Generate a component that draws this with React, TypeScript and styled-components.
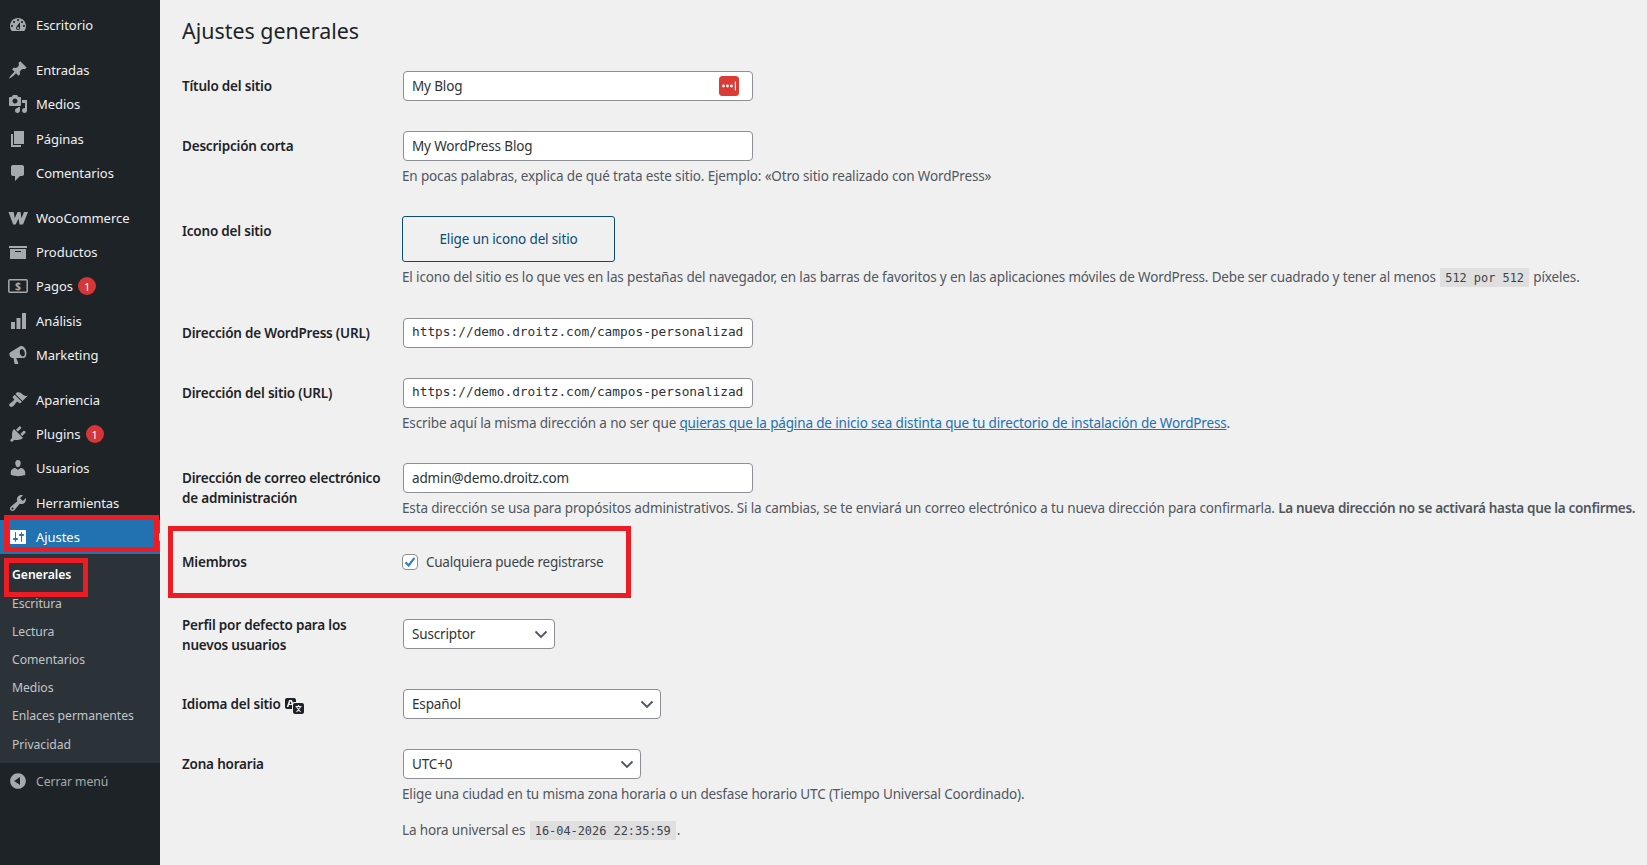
import React from 'react';
import styled, { createGlobalStyle } from 'styled-components';

const FONT = '"Noto Sans", "Open Sans", sans-serif';
const MONO = '"DejaVu Sans Mono", "Liberation Mono", monospace';

const icons: Record<string, string> = {
    dashboard: 'M3.76 16h12.48c1.1-1.37 1.76-3.11 1.76-5 0-4.42-3.58-8-8-8s-8 3.58-8 8c0 1.89.66 3.63 1.76 5zM10 4c.55 0 1 .45 1 1s-.45 1-1 1-1-.45-1-1 .45-1 1-1zM6 6c.55 0 1 .45 1 1s-.45 1-1 1-1-.45-1-1 .45-1 1-1zm8 0c.55 0 1 .45 1 1s-.45 1-1 1-1-.45-1-1 .45-1 1-1zm-5.37 5.55L12 7v6c0 1.1-.9 2-2 2s-2-.9-2-2c0-.57.24-1.08.63-1.45zM4 10c.55 0 1 .45 1 1s-.45 1-1 1-1-.45-1-1 .45-1 1-1zm12 0c.55 0 1 .45 1 1s-.45 1-1 1-1-.45-1-1 .45-1 1-1zm-5 3c0-.55-.45-1-1-1s-1 .45-1 1 .45 1 1 1 1-.45 1-1z',
    post: 'M10.44 3.02l1.82-1.82 6.36 6.35-1.83 1.82c-1.05-.68-2.48-.57-3.41.36l-.75.75c-.92.93-1.04 2.35-.35 3.41l-1.83 1.82-2.41-2.41-2.8 2.79c-.42.42-3.38 2.71-3.8 2.29s1.86-3.39 2.28-3.81l2.79-2.79L4.1 9.36l1.83-1.82c1.05.69 2.48.57 3.4-.36l.75-.75c.93-.92 1.05-2.35.36-3.41z',
    media: 'M13 11V4c0-.55-.45-1-1-1h-1.67L9 1H5L3.67 3H2c-.55 0-1 .45-1 1v7c0 .55.45 1 1 1h10c.55 0 1-.45 1-1zM7 4.5c1.38 0 2.5 1.12 2.5 2.5S8.38 9.5 7 9.5 4.5 8.38 4.5 7 5.62 4.5 7 4.5zM14 6h5v10.5c0 1.38-1.12 2.5-2.5 2.5S14 17.88 14 16.5s1.12-2.5 2.5-2.5c.17 0 .34.02.5.05V9h-3V6zm-4 8.05V13h2v3.5c0 1.38-1.12 2.5-2.5 2.5S7 17.88 7 16.5 8.12 14 9.5 14c.17 0 .34.02.5.05z',
    page: 'M6 15V2h10v13H6zm-1 1h8v2H3V5h2v11z',
    comment: 'M5 2h9c1.1 0 2 .9 2 2v7c0 1.1-.9 2-2 2h-2l-5 5v-5H5c-1.1 0-2-.9-2-2V4c0-1.1.9-2 2-2z',
    woo: 'M0.5 4h5.200l1 6.200L9.500 4h3l1 6.200L16 4h4l-5 12.500h-3.500l-1-6-2.800 6H5.200z',
    archive: 'M19 4v2H1V4h18zM2 7h16v10H2V7zm11 3V9H7v1h6z',
    chart: 'M3 11h4v7H3zM8.500 7h4v11h-4zM14 2h4v16h-4z',
    megaphone: 'M18.15 5.94c.46 1.62.38 3.22-.02 4.48-.42 1.28-1.26 2.18-2.3 2.48-.16.06-.26.06-.4.06-.06.02-.12.02-.18.02-.06.02-.14.02-.22.02h-6.8l2.22 5.5c.02.14-.06.26-.14.34-.08.1-.24.16-.34.16H6.95c-.1 0-.26-.06-.34-.16-.08-.08-.16-.2-.14-.34l-1-5.5H4.25l-.02-.02c-.5.06-1.08-.18-1.54-.62s-.88-1.08-1.06-1.88c-.24-.8-.2-1.56-.02-2.2.18-.62.58-1.08 1.06-1.3l.02-.02 9-5.4c.1-.06.18-.1.24-.16.06-.04.14-.08.24-.12.16-.08.28-.12.5-.18 1.04-.3 2.24.1 3.22 1s1.84 2.24 2.26 3.86zM13.2 4.200c-1.300.4-1.800 2.300-1.200 4.300s2.100 3.200 3.400 2.800 1.800-2.300 1.200-4.300-2.100-3.200-3.400-2.800z',
    brush: 'M14.48 11.06L7.41 3.99l1.5-1.5c.5-.56 2.3-.47 3.51.32 1.21.8 1.43 1.28 2.91 2.1 1.18.64 2.45 1.26 4.45.85zm-.71.71L6.7 4.7 4.93 6.47c-.39.39-.39 1.02 0 1.41l1.06 1.06c.39.39.39 1.03 0 1.42-.6.6-1.43 1.11-2.21 1.69-.35.26-.7.53-1.01.84C1.43 13.23.4 14.89 1.75 16.25c1.35 1.35 3.01.33 4.36-1.02.31-.31.58-.66.84-1.01.58-.78 1.09-1.61 1.69-2.21.39-.39 1.02-.39 1.41 0l1.06 1.06c.39.39 1.02.39 1.41 0z',
    plugin: 'M13.11 4.36L9.87 7.6 8 5.73l3.24-3.24c.35-.34 1.05-.2 1.56.32.52.51.66 1.21.31 1.55zm-8 1.77l.91-1.12 9.01 9.01-1.19.84c-.71.71-2.63 1.16-3.82 1.16H6.14L4.9 17.26c-.59.59-1.54.59-2.12 0-.59-.58-.59-1.53 0-2.12l1.24-1.24v-3.88c0-1.13.4-3.19 1.09-3.89zm7.26 3.97l3.24-3.24c.34-.35 1.04-.21 1.55.31.52.51.66 1.21.31 1.55l-3.24 3.25z',
    users: 'M10 9.25c-2.27 0-2.73-3.44-2.73-3.44C7 4.02 7.82 2 9.97 2c2.16 0 2.98 2.02 2.71 3.81 0 0-.41 3.44-2.68 3.44zm0 2.57L12.72 10c2.39 0 4.52 2.33 4.52 4.53v2.49s-3.65 1.13-7.24 1.13c-3.65 0-7.24-1.13-7.24-1.13v-2.49c0-2.25 1.94-4.48 4.47-4.48z',
    tools: 'M16.68 9.77c-1.34 1.34-3.3 1.67-4.95.99l-5.41 6.52c-.99.99-2.59.99-3.58 0s-.99-2.59 0-3.57l6.52-5.42c-.68-1.65-.35-3.61.99-4.95 1.28-1.28 3.12-1.62 4.72-1.06l-2.89 2.89 2.82 2.82 2.86-2.87c.53 1.58.18 3.39-1.08 4.65zM3.81 16.21c.4.39 1.04.39 1.43 0 .4-.4.4-1.04 0-1.43-.39-.4-1.03-.4-1.43 0-.39.39-.39 1.03 0 1.43z',
    settings: 'M18 16V4c0-.55-.45-1-1-1H3c-.55 0-1 .45-1 1v12c0 .55.45 1 1 1h14c.55 0 1-.45 1-1zM8 11h1c.55 0 1 .45 1 1s-.45 1-1 1H8v1.5c0 .28-.22.5-.5.5s-.5-.22-.5-.5V13H6c-.55 0-1-.45-1-1s.45-1 1-1h1V5.5c0-.28.22-.5.5-.5s.5.22.5.5V11zm5-2h-1c-.55 0-1-.45-1-1s.45-1 1-1h1V5.5c0-.28.22-.5.5-.5s.5.22.5.5V7h1c.55 0 1 .45 1 1s-.45 1-1 1h-1v5.5c0 .28-.22.5-.5.5s-.5-.22-.5-.5V9z',
    collapse: 'M10 2.16c4.33 0 7.84 3.51 7.84 7.84s-3.51 7.84-7.84 7.84S2.16 14.33 2.16 10 5.71 2.16 10 2.16zm2 11.72V6.12L6.18 9.97z',
};

const Icon = ({ name }: { name: string }) => (
    <IconSvg viewBox="0 0 20 20">
        <path d={icons[name]} fillRule="evenodd" />
    </IconSvg>
);

const PaymentsIcon = () => (
    <IconSvg viewBox="0 0 20 20">
        <rect x="0.8" y="3.8" width="18.400" height="12.400" rx="1" fill="none" stroke="currentColor" strokeWidth="1.500" />
        <text x="10" y="14" fontSize="10.500" fontWeight="700" textAnchor="middle" fill="currentColor" fontFamily={FONT}>$</text>
    </IconSvg>
);

type MenuEntry = { label: string; icon: string; badge?: string };

const groups: MenuEntry[][] = [
    [{ label: 'Escritorio', icon: 'dashboard' }],
    [
        { label: 'Entradas', icon: 'post' },
        { label: 'Medios', icon: 'media' },
        { label: 'Páginas', icon: 'page' },
        { label: 'Comentarios', icon: 'comment' },
    ],
    [
        { label: 'WooCommerce', icon: 'woo' },
        { label: 'Productos', icon: 'archive' },
        { label: 'Pagos', icon: 'payments', badge: '1' },
        { label: 'Análisis', icon: 'chart' },
        { label: 'Marketing', icon: 'megaphone' },
    ],
    [
        { label: 'Apariencia', icon: 'brush' },
        { label: 'Plugins', icon: 'plugin', badge: '1' },
        { label: 'Usuarios', icon: 'users' },
        { label: 'Herramientas', icon: 'tools' },
    ],
];

const subItems = ['Escritura', 'Lectura', 'Comentarios', 'Medios', 'Enlaces permanentes', 'Privacidad'];

const Chevron = () => (
    <svg width="14" height="14" viewBox="0 0 14 14" fill="none" stroke="#50575e" strokeWidth="1.900">
        <path d="M1.500 4.500 7 10l5.500-5.500" />
    </svg>
);

const Sidebar = () => (
    <Side>
        {groups.map((group, i) => (
            <MenuGroup key={i}>
                {group.map(item => (
                    <MenuItem key={item.label}>
                        <IconSlot>
                            {item.icon === 'payments' ? <PaymentsIcon /> : <Icon name={item.icon} />}
                        </IconSlot>
                        {item.label}
                        {item.badge && <Badge>{item.badge}</Badge>}
                    </MenuItem>
                ))}
            </MenuGroup>
        ))}
        <ActiveItem>
            <IconSlot>
                <Icon name="settings" />
            </IconSlot>
            Ajustes
            <MenuArrow />
            <RedBox $top={-5} $left={4} $width={155} $height={37} />
        </ActiveItem>
        <SubMenu>
            <SubItem $current>
                Generales
                <RedBox $top={-3} $left={4} $width={84} $height={39} />
            </SubItem>
            {subItems.map(label => (
                <SubItem key={label}>{label}</SubItem>
            ))}
        </SubMenu>
        <Collapse>
            <IconSlot>
                <Icon name="collapse" />
            </IconSlot>
            Cerrar menú
        </Collapse>
    </Side>
);

const App = () => (
    <Page>
        <GlobalStyle />
        <Sidebar />
        <Main>
            <Title>Ajustes generales</Title>
            <FormTable>
                <Row>
                    <Label>Título del sitio</Label>
                    <Cell>
                        <TextField>
                            My Blog
                            <PassBadge viewBox="0 0 20 20">
                                <rect width="20" height="20" rx="3.500" fill="#db3a35" />
                                <circle cx="4.500" cy="10" r="1.400" fill="#fff" />
                                <circle cx="8.500" cy="10" r="1.400" fill="#fff" />
                                <circle cx="12.500" cy="10" r="1.400" fill="#fff" />
                                <rect x="15.800" y="5.500" width="1.200" height="9" fill="#fff" />
                            </PassBadge>
                        </TextField>
                    </Cell>
                </Row>
                <Row>
                    <Label>Descripción corta</Label>
                    <Cell>
                        <TextField>My WordPress Blog</TextField>
                        <Description>En pocas palabras, explica de qué trata este sitio. Ejemplo: «Otro sitio realizado con WordPress»</Description>
                    </Cell>
                </Row>
                <Row>
                    <Label>Icono del sitio</Label>
                    <Cell>
                        <IconButton>Elige un icono del sitio</IconButton>
                        <Description>
                            El icono del sitio es lo que ves en las pestañas del navegador, en las barras de favoritos y en las aplicaciones móviles de WordPress. Debe ser cuadrado y tener al menos <Code>512 por 512</Code> píxeles.
                        </Description>
                    </Cell>
                </Row>
                <Row>
                    <Label>Dirección de WordPress (URL)</Label>
                    <Cell>
                        <TextField $mono>https://demo.droitz.com/campos-personalizad</TextField>
                    </Cell>
                </Row>
                <Row>
                    <Label>Dirección del sitio (URL)</Label>
                    <Cell>
                        <TextField $mono>https://demo.droitz.com/campos-personalizad</TextField>
                        <Description>
                            Escribe aquí la misma dirección a no ser que <DocLink>quieras que la página de inicio sea distinta que tu directorio de instalación de WordPress</DocLink>.
                        </Description>
                    </Cell>
                </Row>
                <Row>
                    <Label>Dirección de correo electrónico<br />de administración</Label>
                    <Cell $bottom={14}>
                        <TextField>admin@demo.droitz.com</TextField>
                        <Description>
                            Esta dirección se usa para propósitos administrativos. Si la cambias, se te enviará un correo electrónico a tu nueva dirección para confirmarla. <Strong>La nueva dirección no se activará hasta que la confirmes.</Strong>
                        </Description>
                    </Cell>
                </Row>
                <Row>
                    <Label>Miembros</Label>
                    <Cell $top={20} $bottom={23}>
                        <CheckLine>
                            <CheckBox>
                                <svg width="14" height="14" viewBox="0 0 14 14" fill="none" stroke="#3582c4" strokeWidth="2.200">
                                    <path d="M2.500 7.200 5.600 10.500 11.500 2.800" />
                                </svg>
                            </CheckBox>
                            Cualquiera puede registrarse
                        </CheckLine>
                    </Cell>
                    <RedBox $top={-6} $left={-14} $width={463} $height={72} />
                </Row>
                <Row>
                    <Label>Perfil por defecto para los<br />nuevos usuarios</Label>
                    <Cell $top={24} $bottom={25}>
                        <SelectField $width={152}>Suscriptor<Chevron /></SelectField>
                    </Cell>
                </Row>
                <Row>
                    <Label>
                        Idioma del sitio
                        <TranslateIcon viewBox="0 0 20 20">
                            <path d="M11 7H9.490c-.63 0-1.250.3-1.590.7L7 5H4.130l-2.390 7h1.690l.74-2H7v4H2c-1.100 0-2-.9-2-2V5c0-1.100.9-2 2-2h7c1.100 0 2 .9 2 2v2zM6.510 9H4.490l1-2.930zM10 8h7c1.100 0 2 .9 2 2v7c0 1.100-.9 2-2 2h-7c-1.100 0-2-.9-2-2v-7c0-1.100.9-2 2-2z" fillRule="evenodd" fill="#1d2327" />
                            <path d="M10.500 11.500h6M13.500 10v1.500M11.500 17l4-5M15.500 17l-4-5" stroke="#f0f0f1" strokeWidth="1.100" fill="none" />
                        </TranslateIcon>
                    </Label>
                    <Cell>
                        <SelectField $width={258}>Español<Chevron /></SelectField>
                    </Cell>
                </Row>
                <Row>
                    <Label>Zona horaria</Label>
                    <Cell>
                        <SelectField $width={238}>UTC+0<Chevron /></SelectField>
                        <Description>Elige una ciudad en tu misma zona horaria o un desfase horario UTC (Tiempo Universal Coordinado).</Description>
                        <TimeLine>La hora universal es <Code>16-04-2026 22:35:59</Code>.</TimeLine>
                    </Cell>
                </Row>
            </FormTable>
        </Main>
    </Page>
);

export default App;

const GlobalStyle = createGlobalStyle`
    html, body {
        margin: 0;
        height: 100%;
        overflow: hidden;
        background: #f0f0f1;
    }
    * { box-sizing: border-box; }
`;

const Page = styled.div`
    display: flex;
    height: 865px;
    font-family: ${FONT};
    color: #3c434a;
`;

const Side = styled.nav`
    flex: 0 0 160px;
    padding-top: 8px;
    background: #1d2327;
    color: #f0f0f1;
    font-size: 13px;
    letter-spacing: -0.05px;
`;

const MenuGroup = styled.div`
    & + & {
        margin-top: 11px;
    }
`;

const MenuItem = styled.div`
    position: relative;
    display: flex;
    align-items: center;
    height: 34.2px;
`;

const ActiveItem = styled(MenuItem)`
    background: #2271b1;
    color: #fff;
`;

const IconSlot = styled.span`
    flex: 0 0 36px;
    display: flex;
    justify-content: center;
    color: #a7aaad;

    ${ActiveItem} & {
        color: #fff;
    }
`;

const IconSvg = styled.svg`
    width: 20px;
    height: 20px;
    fill: currentColor;
`;

const Badge = styled.span`
    display: inline-flex;
    justify-content: center;
    align-items: center;
    width: 18px;
    height: 18px;
    margin-left: 5px;
    border-radius: 50%;
    background: #d63638;
    color: #fff;
    font-size: 11px;
`;

const MenuArrow = styled.span`
    position: absolute;
    right: 0;
    top: 50%;
    margin-top: -4px;
    border: 4px solid transparent;
    border-right-color: #f0f0f1;
    border-left-width: 0;
`;

const RedBox = styled.span<{ $top: number; $left: number; $width: number; $height: number }>`
    position: absolute;
    top: ${p => p.$top}px;
    left: ${p => p.$left}px;
    width: ${p => p.$width}px;
    height: ${p => p.$height}px;
    border: 5px solid #ed1c24;
    pointer-events: none;
`;

const SubMenu = styled.div`
    padding: 7.600px 0 4.400px;
    background: #2c3338;
`;

const SubItem = styled.div<{ $current?: boolean }>`
    position: relative;
    height: 28.2px;
    padding: 5px 12px;
    font-size: 12.200px;
    line-height: 18.2px;
    white-space: nowrap;
    color: ${p => (p.$current ? '#fff' : '#c3c4c7')};
    font-weight: ${p => (p.$current ? 600 : 400)};
`;

const Collapse = styled.div`
    display: flex;
    align-items: center;
    height: 36px;
    color: #a7aaad;
    font-size: 12.200px;
`;

const Main = styled.main`
    flex: 1;
    min-width: 0;
    padding: 7px 0 0 22px;
`;

const Title = styled.h1`
    margin: 0;
    padding: 9px 0 4px;
    font-size: 21.400px;
    font-weight: 400;
    line-height: 30px;
    color: #1d2327;
`;

const FormTable = styled.div`
    margin-top: 6px;
    font-size: 13.500px;
    letter-spacing: -0.15px;
`;

const Row = styled.div`
    position: relative;
    display: grid;
    grid-template-columns: 220px 1fr;
`;

const Label = styled.div`
    display: block;
    padding-top: 19.500px;
    color: #1d2327;
    font-weight: 600;
    letter-spacing: -0.2px;
    line-height: 20px;
    white-space: nowrap;
`;

const Cell = styled.div<{ $top?: number; $bottom?: number }>`
    padding: ${p => p.$top ?? 15}px 0 ${p => p.$bottom ?? 15}px;
    min-width: 0;
`;

const TextField = styled.div<{ $mono?: boolean }>`
    position: relative;
    width: 350px;
    height: 30px;
    margin: 0 1px;
    padding: 0 8px;
    overflow: hidden;
    border: 1px solid #8c8f94;
    border-radius: 4px;
    background: #fff;
    color: #2c3338;
    font-family: ${p => (p.$mono ? MONO : 'inherit')};
    font-size: ${p => (p.$mono ? '12.800px' : 'inherit')};
    letter-spacing: ${p => (p.$mono ? 0 : 'inherit')};
    line-height: ${p => (p.$mono ? 26 : 28)}px;
    white-space: nowrap;
`;

const PassBadge = styled.svg`
    position: absolute;
    top: 4px;
    right: 13px;
    width: 20px;
    height: 20px;
`;

const SelectField = styled.div<{ $width: number }>`
    display: flex;
    justify-content: space-between;
    align-items: center;
    width: ${p => p.$width}px;
    height: 30px;
    margin: 0 1px;
    padding: 0 6px 0 8px;
    border: 1px solid #8c8f94;
    border-radius: 4px;
    background: #fff;
    color: #2c3338;
`;

const Description = styled.p`
    margin: 5px 0 0;
    color: #50575e;
    line-height: 20px;
    white-space: nowrap;
`;

const Strong = styled.strong`
    font-weight: 600;
    letter-spacing: -0.3px;
`;

const TimeLine = styled(Description)`
    margin-top: 16px;
`;

const IconButton = styled.div`
    display: flex;
    justify-content: center;
    align-items: center;
    width: 213px;
    height: 46px;
    border: 1px solid #0a4b78;
    border-radius: 3px;
    color: #0a4b78;
`;

const Code = styled.code`
    margin: 0 1px;
    padding: 3px 5px 2px;
    background: rgba(0, 0, 0, 0.07);
    color: #3c434a;
    font-family: ${MONO};
    font-size: 11.900px;
    letter-spacing: 0;
`;

const DocLink = styled.span`
    color: #2271b1;
    text-decoration: underline;
`;

const CheckLine = styled.div`
    display: flex;
    align-items: center;
    gap: 8px;
    height: 20px;
    color: #3c434a;
    letter-spacing: -0.25px;
`;

const CheckBox = styled.span`
    display: flex;
    justify-content: center;
    align-items: center;
    width: 16px;
    height: 16px;
    border: 1px solid #8c8f94;
    border-radius: 4px;
    background: #fff;
`;

const TranslateIcon = styled.svg`
    width: 20px;
    height: 20px;
    margin-left: 4px;
    vertical-align: -6px;
`;
